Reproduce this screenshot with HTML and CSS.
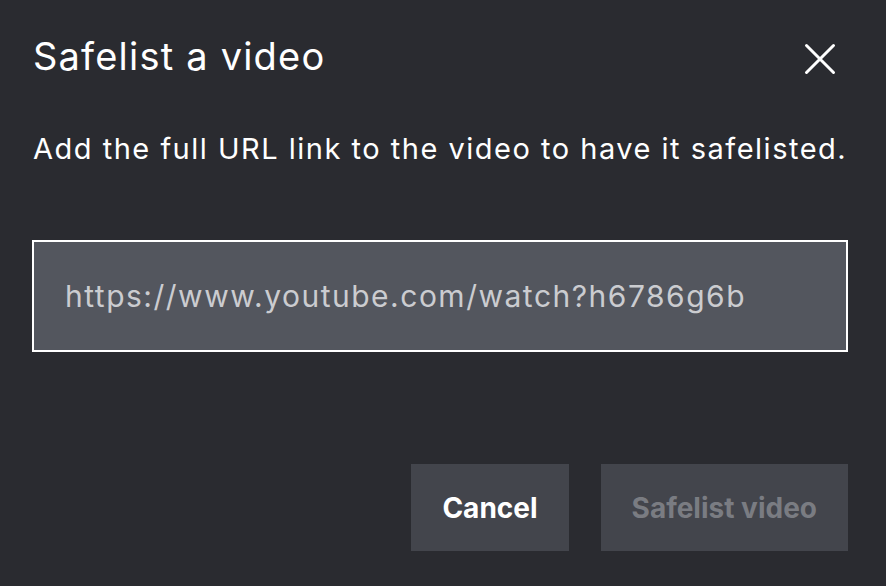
FILE: index.html
```html
<!DOCTYPE html>
<html lang="en">
<head>
  <meta charset="UTF-8" />
  <meta name="viewport" content="width=device-width, initial-scale=1.0"/>
  <title>Safelist a video</title>
  <link rel="stylesheet" href="styles.css">
</head>
<body>
  <div class="dialog">
    <div class="dialog-header">
      <h2>Safelist a video</h2>
      <button class="close" aria-label="Close">
        <svg width="32" height="32" viewBox="0 0 32 32"><path d="M2.5 2.5 L29.5 29.5 M29.5 2.5 L2.5 29.5" stroke="#fff" stroke-width="3" stroke-linecap="round"/></svg>
      </button>
    </div>
    <p class="hint">Add the full URL link to the video to have it safelisted.</p>
    <input class="url" type="text" placeholder="https://www.youtube.com/watch?h6786g6b" />
    <div class="actions">
      <button class="btn">Cancel</button>
      <button class="btn" disabled>Safelist video</button>
    </div>
  </div>
</body>
</html>
```
FILE: styles.css
```css
html, body { margin: 0; height: 100%; }
body { font-family: Inter, "Liberation Sans", sans-serif; background: #2a2b30; color: #fff; }
.dialog { padding: 28px 38px 34px 32px; width: 816px; }
.dialog-header { display: flex; justify-content: space-between; align-items: flex-start; padding-left: 1px; padding-right: 12px; }
.dialog-header h2 { margin: 0; font-size: 38px; font-weight: 400; line-height: 56px; letter-spacing: 1.2px; }
.close { background: none; border: 0; padding: 0; margin-top: 15px; cursor: pointer; }
.hint { margin: 48px 0 0 1px; font-size: 29px; line-height: 34px; letter-spacing: 1.5px; }
.url { display: block; box-sizing: border-box; width: 816px; height: 112px; margin-top: 74px; padding: 0 31px; background: #53565e; border: 2px solid #fff; font-family: inherit; font-size: 30px; letter-spacing: 1.5px; color: #fff; outline: none; }
.url::placeholder { color: #cbccd0; }
.actions { display: flex; justify-content: flex-end; gap: 32px; margin-top: 112px; }
.btn { height: 87px; padding: 0 31px; background: #43454c; border: 0; font-family: inherit; font-size: 28px; font-weight: 700; color: #fff; cursor: pointer; }
.btn:disabled { color: #7a7c82; cursor: default; }
```
